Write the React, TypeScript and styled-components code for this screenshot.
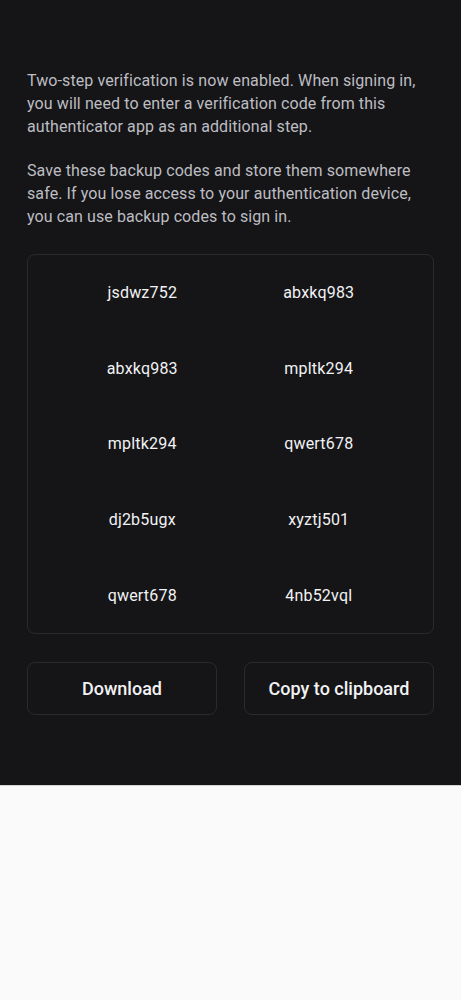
import React from 'react'
import styled, { createGlobalStyle } from 'styled-components'

const GlobalStyle = createGlobalStyle`
  html, body {
    margin: 0;
    padding: 0;
    background: #fafafa;
    font-family: Roboto, 'Liberation Sans', sans-serif;
  }
`

const Panel = styled.div`
  background: #151517;
  height: 786px;
  box-sizing: border-box;
  padding: 69px 27px 0;
  border-bottom: 1px solid #d4d4d6;
`

const Paragraph = styled.p`
  margin: 0 0 21px;
  font-size: 16px;
  line-height: 23px;
  color: #bdbdc2;
  letter-spacing: 0.1px;
`

const CodeBox = styled.div`
  display: grid;
  grid-template-columns: 1fr 1fr;
  margin-top: 26px;
  padding: 0 26px;
  border: 1px solid #2a2a2e;
  border-radius: 8px;
`

const Code = styled.div`
  height: 75.6px;
  display: flex;
  align-items: center;
  justify-content: center;
  font-size: 16px;
  color: #f2f2f4;
  letter-spacing: 0.2px;
`

const Actions = styled.div`
  display: grid;
  grid-template-columns: 1fr 1fr;
  column-gap: 27px;
  margin-top: 28px;
`

const Button = styled.button`
  height: 53px;
  background: transparent;
  border: 1px solid #2a2a2e;
  border-radius: 8px;
  color: #f2f2f4;
  font-family: Roboto, 'Liberation Sans', sans-serif;
  font-size: 18px;
  font-weight: 500;
  cursor: pointer;
`

const codes = [
  'jsdwz752', 'abxkq983',
  'abxkq983', 'mpltk294',
  'mpltk294', 'qwert678',
  'dj2b5ugx', 'xyztj501',
  'qwert678', '4nb52vql',
]

const App = () => {
  return (
    <>
      <GlobalStyle />
      <Panel>
        <Paragraph>
          Two-step verification is now enabled. When signing in, you will need to enter a
          verification code from this authenticator app as an additional step.
        </Paragraph>
        <Paragraph>
          Save these backup codes and store them somewhere safe. If you lose access to your
          authentication device, you can use backup codes to sign in.
        </Paragraph>
        <CodeBox>
          {codes.map((code, i) => (
            <Code key={i}>{code}</Code>
          ))}
        </CodeBox>
        <Actions>
          <Button>Download</Button>
          <Button>Copy to clipboard</Button>
        </Actions>
      </Panel>
    </>
  )
}

export default App
